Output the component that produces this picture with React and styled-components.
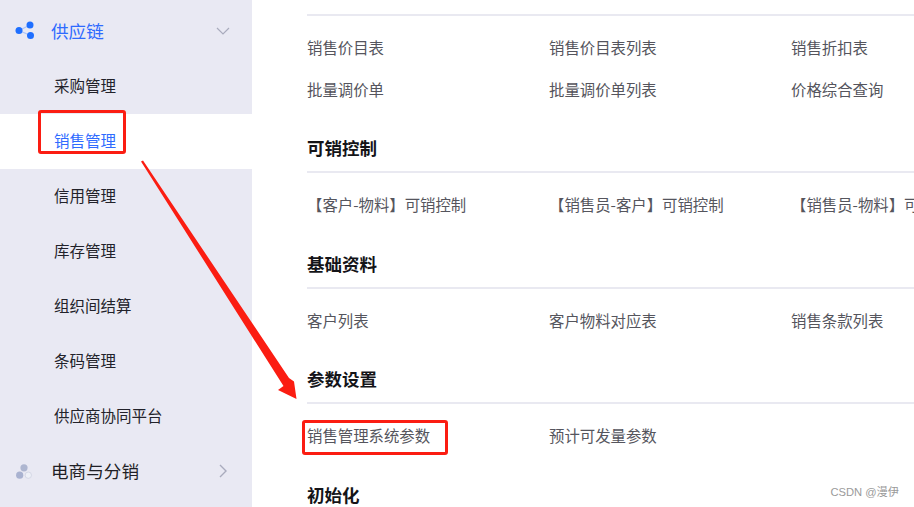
import React from "react";
import styled, { createGlobalStyle } from "styled-components";

const Global = createGlobalStyle`
  html, body { margin: 0; padding: 0; background: #fff; }
  body { font-family: "Noto Sans CJK SC", "Liberation Sans", sans-serif; }
`;
const Page = styled.div`
  position: relative; width: 914px; height: 507px; overflow: hidden; display: flex; background: #fff;
`;
const Sidebar = styled.nav`
  width: 252px; flex: none; background: #e9e9f3; padding-top: 4px; box-sizing: border-box;
`;
const Group = styled.div`
  height: 55px; box-sizing: border-box; display: flex; align-items: center; padding: 0 20px 2px 15px; font-size: 17.6px;
  color: ${p => (p.$open ? "#2f6bff" : "#1f1f26")};
`;
const GroupIcon = styled.svg`width: 22px; height: 22px; flex: none; margin-right: 14px;`;
const GroupName = styled.span`flex: 1;`;
const Chevron = styled.svg`width: 16px; height: 16px; flex: none; color: #a9abbd; margin-right: 1px;`;
const Item = styled.div`
  height: 55px; box-sizing: border-box; display: flex; align-items: center; padding: 0 0 4px 54px; font-size: 15.5px;
  background: ${p => (p.$active ? "#fff" : "transparent")};
  color: ${p => (p.$active ? "#2f6bff" : "#22222a")};
`;
const Main = styled.main`flex: 1; padding: 14px 0 0 55px; min-width: 0;`;
const Rule = styled.div`height: 2px; background: #e9e9f1; width: 700px;`;
const Rows = styled.div`
  display: grid; grid-template-columns: repeat(3, 242px); grid-auto-rows: 42px; padding-top: 10px;
`;
const Link = styled.div`
  font-size: 15.4px; color: #55555d; line-height: 42px; white-space: nowrap;
`;
const Section = styled.section`height: 115.5px;`;
const FirstSection = styled.section`height: 115px;`;
const Title = styled.h3`
  margin: 0; height: 42px; line-height: 37px; font-size: 17.5px; font-weight: 700; color: #141418;
`;
const Mark = styled.div`
  position: absolute; border: 3px solid #fb1d12; border-radius: 3px; box-sizing: border-box;
  left: ${p => p.$x}px; top: ${p => p.$y}px; width: ${p => p.$w}px; height: ${p => p.$h}px;
`;
const ArrowLayer = styled.svg`position: absolute; left: 0; top: 0; width: 914px; height: 507px; pointer-events: none;`;
const Watermark = styled.div`
  position: absolute; right: 15px; top: 485px; font-size: 11.2px; line-height: 14px; color: #9a9a9a;
  font-family: "Liberation Sans", "Noto Sans CJK SC", sans-serif;
`;

const sections = [
  { title: "可销控制", rows: ["【客户-物料】可销控制", "【销售员-客户】可销控制", "【销售员-物料】可销控制"] },
  { title: "基础资料", rows: ["客户列表", "客户物料对应表", "销售条款列表"] },
  { title: "参数设置", rows: ["销售管理系统参数", "预计可发量参数"] },
];
const items = ["采购管理", "销售管理", "信用管理", "库存管理", "组织间结算", "条码管理", "供应商协同平台"];

export default function App() {
  return (
    <Page>
      <Global />
      <Sidebar>
        <Group $open>
          <GroupIcon viewBox="0 0 22 22">
            <path d="M4 10.500L15 5M4 10.500L15.500 15.500" stroke="#a9c4fb" strokeWidth="1.3" />
            <circle cx="4" cy="10.500" r="3.5" fill="#1f6fff" />
            <circle cx="15" cy="5" r="3.5" fill="#1f6fff" />
            <circle cx="15.500" cy="15.500" r="3.5" fill="#1f6fff" />
          </GroupIcon>
          <GroupName>供应链</GroupName>
          <Chevron viewBox="0 0 16 16"><path d="M2 5l6 6 6-6" fill="none" stroke="currentColor" strokeWidth="1.2" /></Chevron>
        </Group>
        {items.map(t => <Item key={t} $active={t === "销售管理"}>{t}</Item>)}
        <Group>
          <GroupIcon viewBox="0 0 22 22">
            <circle cx="9" cy="7.800" r="3.6" fill="#aeb6d0" />
            <circle cx="4.700" cy="15.200" r="3.6" fill="#a9b2d0" />
            <circle cx="13.300" cy="15.200" r="3.2" fill="#eef0f7" stroke="#d5d8e6" strokeWidth="1" />
          </GroupIcon>
          <GroupName>电商与分销</GroupName>
          <Chevron viewBox="0 0 16 16"><path d="M5 2l6 6-6 6" fill="none" stroke="currentColor" strokeWidth="1.4" /></Chevron>
        </Group>
      </Sidebar>
      <Main>
        <FirstSection>
          <Rule />
          <Rows>
            {["销售价目表", "销售价目表列表", "销售折扣表", "批量调价单", "批量调价单列表", "价格综合查询"].map(t => <Link key={t}>{t}</Link>)}
          </Rows>
        </FirstSection>
        {sections.map(s => (
          <Section key={s.title}>
            <Title>{s.title}</Title>
            <Rule />
            <Rows>{s.rows.map(t => <Link key={t}>{t}</Link>)}</Rows>
          </Section>
        ))}
        <Title>初始化</Title>
      </Main>
      <Mark $x={38} $y={110} $w={88} $h={44} />
      <Mark $x={302} $y={420} $w={146} $h={35} />
      <ArrowLayer viewBox="0 0 914 507">
        <path d="M141 161.500 L143 160.500 L289 378 L294 381.500 L296.500 399 L278 390 L283.500 386 Z" fill="#fb1d12" />
      </ArrowLayer>
      <Watermark>CSDN @漫伊</Watermark>
    </Page>
  );
}
